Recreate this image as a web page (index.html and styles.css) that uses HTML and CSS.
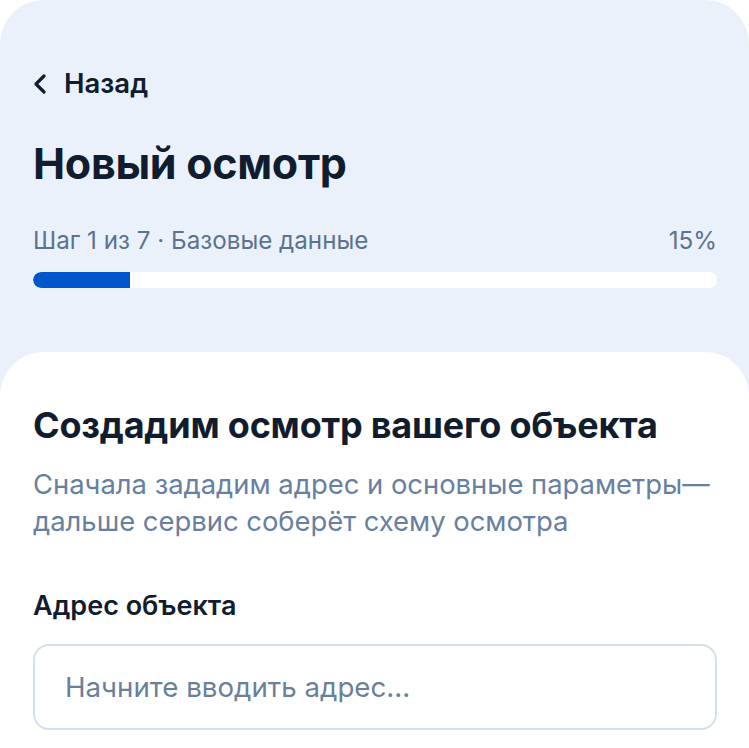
FILE: index.html
```html
<!DOCTYPE html>
<html lang="ru">
<head>
<meta charset="utf-8">
<title>Новый осмотр</title>
<link rel="stylesheet" href="styles.css">
</head>
<body>
<div class="screen">
  <header class="top">
    <a class="back" href="#">
      <svg class="back-icon" width="16" height="22" viewBox="0 0 16 22" aria-hidden="true">
        <path d="M12 3 L4 11 L12 19" fill="none" stroke="#111d2e" stroke-width="3.2" stroke-linecap="round" stroke-linejoin="round"/>
      </svg>
      <span>Назад</span>
    </a>
    <h1 class="title">Новый осмотр</h1>
    <div class="step-row">
      <span>Шаг 1 из 7 · Базовые данные</span>
      <span>15%</span>
    </div>
    <div class="bar"><div class="bar-fill" style="width:14.2%"></div></div>
  </header>
  <main class="card">
    <h2 class="card-title">Создадим осмотр вашего объекта</h2>
    <p class="card-sub">Сначала зададим адрес и основные параметры—<br>дальше сервис соберёт схему осмотра</p>
    <label class="label" for="addr">Адрес объекта</label>
    <div class="input">
      <span class="placeholder">Начните вводить адрес...</span>
    </div>
  </main>
</div>
</body>
</html>
```

FILE: styles.css
```css
* { box-sizing: border-box; }
html, body { margin: 0; padding: 0; background: #ffffff; }
body {
  font-family: Inter, "Noto Sans", sans-serif;
  color: #111d2e;
  width: 749px;
  height: 748px;
  overflow: hidden;
}
.screen {
  background: #ebf1fb;
  border-radius: 44px 44px 0 0;
  min-height: 748px;
  padding-top: 65px;
}
.top {
  padding: 0 32px 64px 33px;
}
.back {
  display: flex;
  align-items: center;
  gap: 16px;
  height: 36px;
  text-decoration: none;
  color: #111d2e;
  font-size: 27.5px;
  line-height: 36px;
  font-weight: 600;
}
.back-icon { display: block; margin-top: 2px; margin-left: -1px; }
.title {
  margin: 36px 0 0;
  font-size: 43px;
  line-height: 52px;
  font-weight: 700;
  letter-spacing: -0.3px;
}
.step-row {
  margin-top: 37px;
  display: flex;
  justify-content: space-between;
  font-size: 24.2px;
  line-height: 30px;
  color: #5b7291;
}
.bar {
  margin-top: 16px;
  height: 16px;
  background: #ffffff;
  border-radius: 8px;
  overflow: hidden;
}
.bar-fill {
  height: 100%;
  background: #0057cc;
  border-radius: 8px 0 0 8px;
}
.card {
  background: #ffffff;
  border-radius: 44px 44px 0 0;
  padding: 51px 30px 40px 33px;
  min-height: 400px;
}
.card-title {
  margin: 0;
  font-size: 36px;
  line-height: 44px;
  font-weight: 700;
  letter-spacing: -0.2px;
}
.card-sub {
  margin: 19px 0 0;
  font-size: 27.4px;
  line-height: 37px;
  color: #6780a0;
  white-space: nowrap;
}
.label {
  display: block;
  margin-top: 49px;
  font-size: 27px;
  line-height: 34px;
  font-weight: 600;
}
.input {
  margin-top: 21px;
  margin-right: 2px;
  height: 86px;
  border: 2px solid #d3dfee;
  border-radius: 16px;
  display: flex;
  align-items: center;
  padding: 0 30px;
}
.placeholder {
  font-size: 27.7px;
  line-height: 36px;
  color: #6b7f9b;
}
```
